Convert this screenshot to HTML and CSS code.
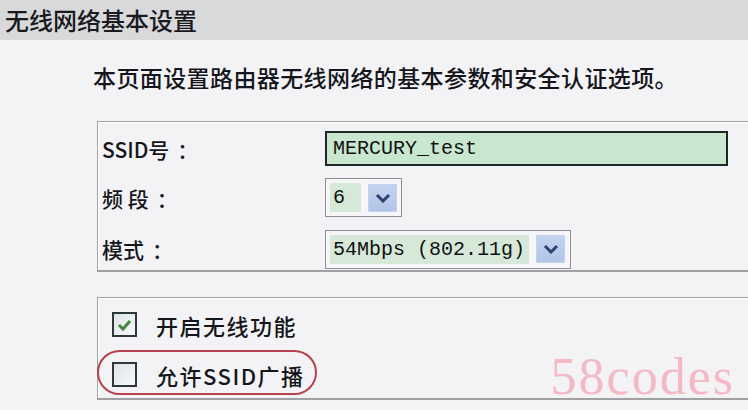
FILE: index.html
```html
<!DOCTYPE html>
<html lang="zh-CN">

<head>
    <meta charset="UTF-8">
    <meta name="viewport" content="width=device-width, initial-scale=1.0">
    <title>无线网络基本设置</title>

    <link rel="stylesheet" href="styles.css">
</head>

<body>
    <div class="page">
        <div class="header">无线网络基本设置</div>

        <p class="intro">本页面设置路由器无线网络的基本参数和安全认证选项。</p>

        <div class="group settings">
            <label class="label" for="ssid">SSID号<span class="colon">：</span></label>
            <div class="field">
                <input type="text" id="ssid" class="text-input" value="MERCURY_test">
            </div>

            <label class="label">频 段<span class="colon">：</span></label>
            <div class="field">
                <div class="select select-sm">
                    <span class="select-value">6</span>
                    <span class="select-arrow">
                        <svg width="16" height="10" viewBox="0 0 16 10">
                            <polyline points="2,2 8,8 14,2" fill="none" stroke="#2c4270" stroke-width="3" />
                        </svg>
                    </span>
                </div>
            </div>

            <label class="label">模式<span class="colon">：</span></label>
            <div class="field">
                <div class="select select-lg">
                    <span class="select-value">54Mbps (802.11g)</span>
                    <span class="select-arrow">
                        <svg width="16" height="10" viewBox="0 0 16 10">
                            <polyline points="2,2 8,8 14,2" fill="none" stroke="#2c4270" stroke-width="3" />
                        </svg>
                    </span>
                </div>
            </div>
        </div>

        <div class="group options">
            <div class="check-row">
                <span class="checkbox">
                    <svg width="17" height="14" viewBox="0 0 17 14">
                        <polyline points="3,7 7,11 14,3" fill="none" stroke="#3f8a3c" stroke-width="3" />
                    </svg>
                </span>
                <span class="check-label">开启无线功能</span>
            </div>
            <div class="check-row">
                <span class="checkbox"></span>
                <span class="check-label">允许SSID广播</span>
            </div>
            <span class="ring"></span>
        </div>

        <div class="watermark">58codes</div>
    </div>
</body>

</html>
```

FILE: styles.css
```css
* {
    box-sizing: border-box;
    padding: 0;
    margin: 0;
}

body {
    background-color: #f3f3f5;
    font-family: "Noto Sans CJK SC", "Liberation Sans", sans-serif;
    font-weight: 500;
    color: #15161c;
}

.page {
    position: relative;
    width: 748px;
    height: 410px;
    overflow: hidden;
}

.header {
    height: 40px;
    line-height: 40px;
    padding-left: 5px;
    font-size: 24px;
    background-color: #d8d9db;
    color: #1a1a1e;
}

.intro {
    padding-top: 22px;
    padding-left: 93px;
    margin-bottom: 29px;
    line-height: 30px;
    font-size: 23px;
    letter-spacing: 0.4px;
}

.group {
    margin-left: 97px;
    border-top: 1px solid #a3a3a6;
    border-left: 1px solid #a3a3a6;
    border-bottom: 2px solid #a0a0a3;
    box-shadow: inset 1px 1px 0 #ffffff;
}

.settings {
    display: grid;
    grid-template-columns: 223px 1fr;
    row-gap: 10px;
    height: 151px;
    padding: 8px 0 0 4px;
}

.label {
    display: flex;
    align-items: center;
    font-size: 21px;
}

.colon {
    padding-left: 8px;
}

.field {
    display: flex;
    align-items: center;
}

.text-input {
    width: 403px;
    height: 35px;
    padding-left: 6px;
    border: 2px solid #1e2626;
    background-color: #c9e7cf;
    font-family: "Liberation Mono", monospace;
    font-size: 20px;
    color: #111;
    outline: none;
}

.select {
    display: flex;
    align-items: center;
    gap: 7px;
    height: 39px;
    padding: 0 4px;
    border: 1px solid #8d8f93;
    background-color: #f6f6f8;
}

.select-sm {
    width: 77px;
}

.select-lg {
    width: 246px;
}

.select-value {
    display: flex;
    align-items: center;
    height: 29px;
    padding-left: 3px;
    background-color: #d6e9d8;
    font-family: "Liberation Mono", monospace;
    font-size: 20px;
    color: #111;
}

.select-sm .select-value {
    width: 32px;
}

.select-lg .select-value {
    width: 199px;
}

.select-arrow {
    display: flex;
    align-items: center;
    justify-content: center;
    width: 29px;
    height: 28px;
    border: 1px solid #c5d2ea;
    background: linear-gradient(#c3d3f0, #b2c5e8);
}

.options {
    position: relative;
    display: flex;
    flex-direction: column;
    gap: 25px;
    height: 103px;
    margin-top: 25px;
    padding: 14px 0 0 14px;
}

.check-row {
    display: flex;
    align-items: center;
    gap: 19px;
    height: 25px;
}

.checkbox {
    display: flex;
    align-items: center;
    justify-content: center;
    width: 25px;
    height: 25px;
    border: 2px solid #2d3838;
    background: linear-gradient(135deg, #dfe3e8, #f7f8fa);
}

.check-label {
    font-size: 22px;
    letter-spacing: 1.5px;
}

.ring {
    position: absolute;
    left: -1px;
    top: 52px;
    width: 220px;
    height: 45px;
    border: 2px solid #b5424c;
    border-radius: 23px;
}

.watermark {
    position: absolute;
    right: 13px;
    top: 351px;
    font-family: "Liberation Serif", serif;
    font-size: 52px;
    font-weight: 400;
    line-height: 52px;
    letter-spacing: 2px;
    color: #f4b9c5;
}
```
